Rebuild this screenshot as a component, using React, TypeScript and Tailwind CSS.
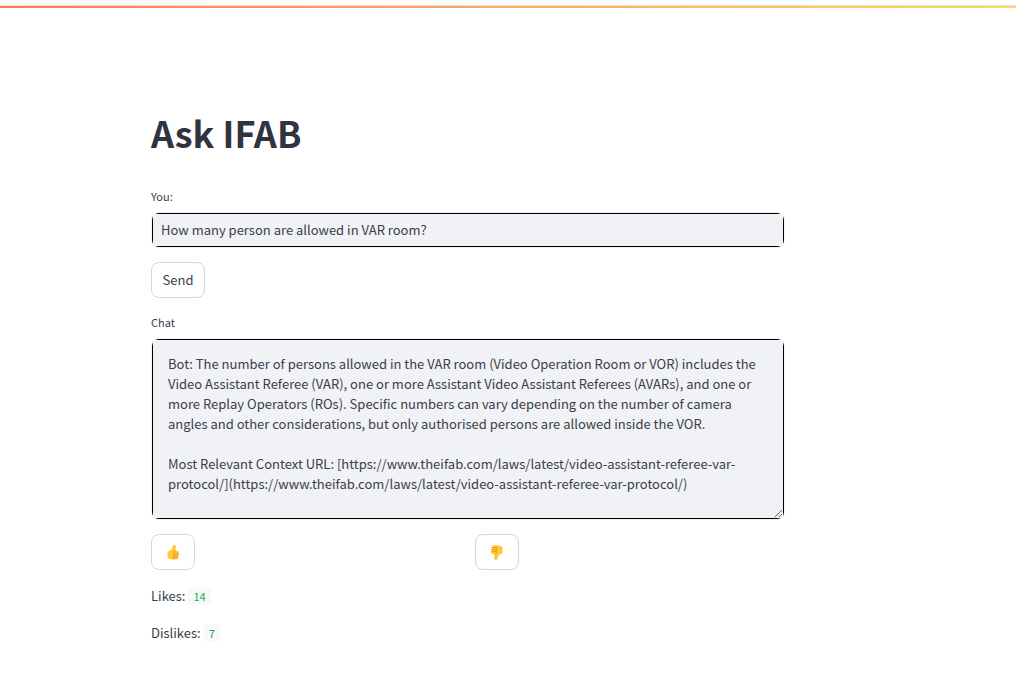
import { useState } from "react";

const CHAT = `Bot: The number of persons allowed in the VAR room (Video Operation Room or VOR) includes the Video Assistant Referee (VAR), one or more Assistant Video Assistant Referees (AVARs), and one or more Replay Operators (ROs). Specific numbers can vary depending on the number of camera angles and other considerations, but only authorised persons are allowed inside the VOR.

Most Relevant Context URL: [https://www.theifab.com/laws/latest/video-assistant-referee-var-protocol/](https://www.theifab.com/laws/latest/video-assistant-referee-var-protocol/)`;

function Thumb({ down = false }: { down?: boolean }) {
  return (
    <svg
      viewBox="0 0 24 30"
      className={down ? "h-[15px] w-3 rotate-180" : "h-[15px] w-3"}
      aria-hidden="true"
    >
      <path
        d="M1 16c0-2 1-3 3-4 4-2 6-4 7-7 0-2 0-5 3-5 3 0 4 2 4 5 0 2-1 5-1 7h4c3 0 3 3 2 5 1 1 1 4 0 5 0 2 0 3-1 4 0 2-1 3-4 3H9c-4 0-8-2-8-5z"
        fill="#ffc83d"
      />
      <path
        d="M23 17h-9c-2 0-2 3 0 4M23 21h-9c-2 0-2 3 0 4M22 25h-8c-2 0-1 3 1 4M17 12c-2 0-4 1-4 4"
        fill="none"
        stroke="#e08f1a"
        strokeWidth="1.6"
      />
    </svg>
  );
}

function Count({ label, value }: { label: string; value: number }) {
  return (
    <p className="flex items-center gap-[3px] leading-5">
      {label}
      <code className="rounded bg-[#f8f9fb] px-[5px] font-['Noto_Sans_CJK_SC',sans-serif] text-[11px] leading-[18px] text-[#21a84f]">
        {value}
      </code>
    </p>
  );
}

const button =
  "flex h-9 items-center justify-center rounded-lg border border-[#d6d6d9] bg-white";
const field =
  "block w-full border border-black bg-[#f0f2f6] text-[#3b3d49] outline-none";
const frame = "overflow-hidden rounded-lg border border-[#f0f2f6]";

export default function App() {
  const [question, setQuestion] = useState("How many person are allowed in VAR room?");
  const [likes, setLikes] = useState(14);
  const [dislikes, setDislikes] = useState(7);

  return (
    <div className="min-h-screen bg-white font-['Noto_Sans_CJK_SC',sans-serif] text-[13px] text-[#3b3d49]">
      <header className="pt-[5px]">
        <div className="h-[3px] border-t border-[#dfdfdf] bg-linear-to-r from-[#ff7957] to-[#ffd966]" />
      </header>
      <main className="ml-[151px] max-w-[634px] pt-[100px] pb-10">
        <h1 className="text-[36px] leading-12 font-bold text-[#31333f]">Ask IFAB</h1>
        <label htmlFor="question" className="mt-[30px] block text-[11px] leading-5">
          You:
        </label>
        <div className={`${frame} mt-1.5`}>
          <input
            id="question"
            value={question}
            onChange={(e) => setQuestion(e.target.value)}
            className={`${field} h-[34px] px-2 pb-0.5`}
          />
        </div>
        <button type="button" className={`${button} mt-3.5 w-[54px]`}>
          Send
        </button>
        <label htmlFor="chat" className="mt-3.5 block text-[11px] leading-5">
          Chat
        </label>
        <div className={`${frame} mt-1.5`}>
          <textarea
            id="chat"
            defaultValue={CHAT}
            className={`${field} h-[180px] resize-y px-[15px] py-3.5 leading-5`}
          />
        </div>
        <div className="mt-3.5 grid grid-cols-2 gap-3.5">
          <button
            type="button"
            aria-label="Like"
            onClick={() => setLikes(likes + 1)}
            className={`${button} w-11`}
          >
            <Thumb />
          </button>
          <button
            type="button"
            aria-label="Dislike"
            onClick={() => setDislikes(dislikes + 1)}
            className={`${button} w-11`}
          >
            <Thumb down />
          </button>
        </div>
        <div className="mt-4 flex flex-col gap-[17px]">
          <Count label="Likes:" value={likes} />
          <Count label="Dislikes:" value={dislikes} />
        </div>
      </main>
    </div>
  );
}
